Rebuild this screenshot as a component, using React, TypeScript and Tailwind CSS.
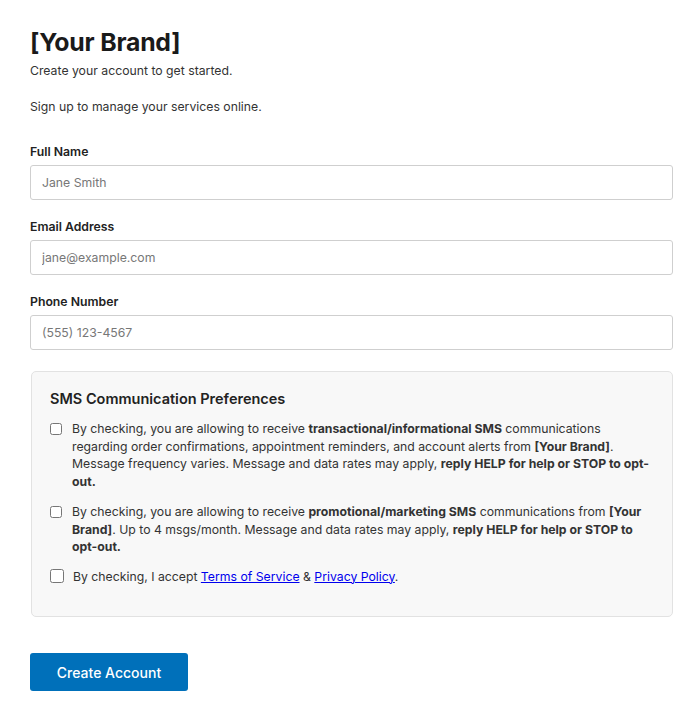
export default function App() {
  return (
    <div
      className="min-h-screen bg-white text-[#1f1f1f]"
      style={{ fontFamily: 'Inter, "Noto Sans", sans-serif' }}
    >
      <div className="w-[643px] ml-[30px] pt-[27px]">
        <h1 className="text-[24.8px] leading-[30px] font-bold tracking-[-0.2px] text-[#1a1a1a]">[Your Brand]</h1>
        <p className="mt-[5px] text-[12.25px] leading-[18px] text-[#333]">Create your account to get started.</p>
        <p className="mt-[18px] text-[12.25px] leading-[18px] text-[#333]">Sign up to manage your services online.</p>

        <form className="mt-[27px]" onSubmit={(e) => e.preventDefault()}>
          <Field label="Full Name" placeholder="Jane Smith" />
          <Field label="Email Address" placeholder="jane@example.com" />
          <Field label="Phone Number" placeholder="(555) 123-4567" />

          <div className="mt-[21px] ml-px rounded-[5px] border border-[#e2e2e2] bg-[#f8f8f8] px-[18px] pt-[17px] pb-[31px]">
            <h2 className="text-[14.5px] leading-[20px] font-semibold text-[#222]">SMS Communication Preferences</h2>

            <label className="mt-[11px] flex items-start gap-[10px] text-[12.25px] leading-[17.5px] text-[#333]">
              <input type="checkbox" className="mt-[3px] h-[12px] w-[12px] shrink-0" />
              <span>
                By checking, you are allowing to receive <b>transactional/informational SMS</b> communications
                regarding order confirmations, appointment reminders, and account alerts from <b>[Your Brand]</b>.
                Message frequency varies. Message and data rates may apply, <b>reply HELP for help or STOP to opt-out.</b>
              </span>
            </label>

            <label className="mt-[13px] flex items-start gap-[10px] text-[12.25px] leading-[17.5px] text-[#333]">
              <input type="checkbox" className="mt-[3px] h-[12px] w-[12px] shrink-0" />
              <span>
                By checking, you are allowing to receive <b>promotional/marketing SMS</b> communications from{' '}
                <b>[Your Brand]</b>. Up to 4 msgs/month. Message and data rates may apply,{' '}
                <b>reply HELP for help or STOP to opt-out.</b>
              </span>
            </label>

            <label className="mt-[12px] flex items-center gap-[9px] text-[12.25px] leading-[17.5px] text-[#333]">
              <input type="checkbox" className="h-[14px] w-[14px] shrink-0" />
              <span>
                By checking, I accept{' '}
                <a href="#" className="text-[#0000ee] underline">Terms of Service</a> &amp;{' '}
                <a href="#" className="text-[#0000ee] underline">Privacy Policy</a>.
              </span>
            </label>
          </div>

          <button
            type="submit"
            className="mt-[36px] h-[38px] w-[158px] rounded-[3px] bg-[#0070ba] text-[14px] font-medium text-white"
          >
            Create Account
          </button>
        </form>
      </div>
    </div>
  )
}

function Field({ label, placeholder }: { label: string; placeholder: string }) {
  return (
    <div className="mb-[18px]">
      <label className="block text-[12.25px] leading-[18px] font-semibold text-[#222]">{label}</label>
      <input
        placeholder={placeholder}
        className="mt-[4px] h-[35px] w-full rounded-[3px] border border-[#cfcfcf] bg-white px-[11px] text-[12.25px] text-[#333] placeholder:text-[#777] outline-none"
      />
    </div>
  )
}
